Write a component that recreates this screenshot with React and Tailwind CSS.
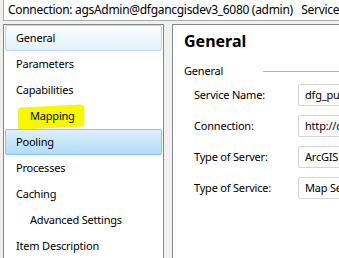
import React from 'react';

const font = { fontFamily: '"Noto Sans", "Open Sans", sans-serif' };

const items = [
    { label: 'General', state: 'hover' },
    { label: 'Parameters' },
    { label: 'Capabilities' },
    { label: 'Mapping', sub: true, marked: true },
    { label: 'Pooling', state: 'selected' },
    { label: 'Processes' },
    { label: 'Caching' },
    { label: 'Advanced Settings', sub: true },
    { label: 'Item Description' },
];

const fields = [
    { label: 'Service Name:', value: 'dfg_public_services', mt: 'mt-[5px]' },
    { label: 'Connection:', value: 'http://dfgancgisdev3', mt: 'mt-[9px]' },
    { label: 'Type of Server:', value: 'ArcGIS Server', mt: 'mt-[9px]' },
    { label: 'Type of Service:', value: 'Map Service', mt: 'mt-[9px]' },
];

function NavRow({ item }) {
    let cls = 'border border-transparent';
    if (item.state === 'hover') cls = 'border border-[#b8d6fb] rounded-[2px] bg-gradient-to-b from-[#fafdff] to-[#e4f2fd]';
    if (item.state === 'selected') cls = 'border border-[#84c8f3] rounded-[2px] bg-gradient-to-b from-[#dcf0fd] to-[#b3dcf8]';
    return (
        <div className={`relative h-[26px] mx-px flex items-center pt-px text-[11px] tracking-[-0.2px] text-black ${item.sub ? 'pl-[24px]' : 'pl-[10px]'} ${cls}`}>
            {item.marked && (
                <div className="absolute left-[12px] top-[2px] w-[66px] h-[22px] bg-[#f7f700] -skew-y-[3deg] rounded-[3px]" />
            )}
            <span className="relative">{item.label}</span>
        </div>
    );
}

export default function App() {
    return (
        <div className="w-[339px] h-[258px] bg-[#f0f0f0] overflow-hidden" style={font}>
            <div className="ml-[3px] w-[420px] h-[22px] -mt-px border border-[#adadad] bg-white flex items-center pl-[4px] text-[12px] tracking-[-0.3px] text-black whitespace-nowrap">
                Connection: agsAdmin@dfgancgisdev3_6080 (admin)&nbsp;&nbsp;&nbsp;Service Type: MapServer
            </div>
            <div className="flex mt-[3px] pl-[3px] gap-[8px] h-[240px]">
                <div className="w-[161px] shrink-0 bg-white border border-[#828790] border-b-0">
                    {items.map((it) => <NavRow key={it.label} item={it} />)}
                </div>
                <div className="flex-1 min-w-0 bg-white border-l border-t border-[#828790] pl-[11px] pt-[6px] text-black whitespace-nowrap overflow-hidden">
                    <div className="text-[16px] font-bold leading-[20px]">General</div>
                    <div className="flex items-center mt-[12px] text-[11px] tracking-[-0.2px] leading-[16px]">
                        <span>General</span>
                        <div className="ml-[40px] w-[200px] h-px bg-[#b0b0b0]" />
                    </div>
                    {fields.map((f) => (
                        <div key={f.label} className={`flex items-center ${f.mt} text-[11px] tracking-[-0.2px] pl-[10px]`}>
                            <span className="w-[104px] shrink-0">{f.label}</span>
                            <div className="h-[22px] w-[200px] shrink-0 border border-[#d4d4d4] rounded-[2px] flex items-center pl-[6px]">{f.value}</div>
                        </div>
                    ))}
                </div>
            </div>
        </div>
    );
}
